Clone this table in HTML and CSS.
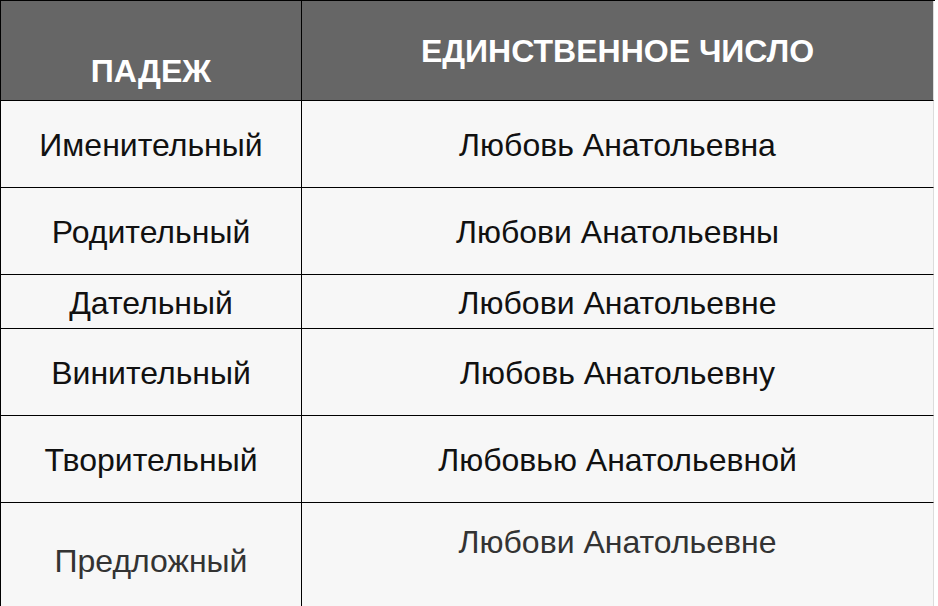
FILE: index.html
```html
<!DOCTYPE html>
<html lang="ru">
<head>
<meta charset="utf-8">
<title>Склонение</title>
<link rel="stylesheet" href="styles.css">
</head>
<body>
<div class="table">
  <div class="cell head head-case">ПАДЕЖ</div>
  <div class="cell head head-num end">ЕДИНСТВЕННОЕ ЧИСЛО</div>

  <div class="cell">Именительный</div>
  <div class="cell end">Любовь Анатольевна</div>

  <div class="cell">Родительный</div>
  <div class="cell end">Любови Анатольевны</div>

  <div class="cell">Дательный</div>
  <div class="cell end">Любови Анатольевне</div>

  <div class="cell">Винительный</div>
  <div class="cell end">Любовь Анатольевну</div>

  <div class="cell">Творительный</div>
  <div class="cell end">Любовью Анатольевной</div>

  <div class="cell last last-case">Предложный</div>
  <div class="cell last last-num end">Любови Анатольевне</div>
</div>
</body>
</html>
```

FILE: styles.css
```css
html, body {
  margin: 0;
  padding: 0;
  background: #ffffff;
}

.table {
  display: grid;
  grid-template-columns: 301px 632px;
  grid-template-rows: 100px 87px 87px 54px 87px 87px 120px;
  width: 934px;
  border-top: 1px solid #000;
  border-left: 1px solid #000;
  font-family: "Liberation Sans", Arial, sans-serif;
  font-size: 32px;
  color: #111;
}

.cell {
  box-sizing: border-box;
  display: flex;
  align-items: center;
  justify-content: center;
  padding-top: 3px;
  background: #f7f7f7;
  border-right: 1px solid #000;
  border-bottom: 1px solid #000;
  white-space: nowrap;
}

.cell.end {
  border-right-color: #dcdcdc;
}

.head {
  background: #666666;
  color: #ffffff;
  font-weight: bold;
}

.head-case {
  align-items: flex-end;
  padding-top: 0;
  padding-bottom: 10px;
}

.head-num {
  align-items: flex-start;
  padding-top: 32px;
}

.last {
  color: #333;
  border-bottom: none;
}

.last-case {
  align-items: flex-start;
  padding-top: 40px;
}

.last-num {
  align-items: flex-start;
  padding-top: 21px;
}
```
